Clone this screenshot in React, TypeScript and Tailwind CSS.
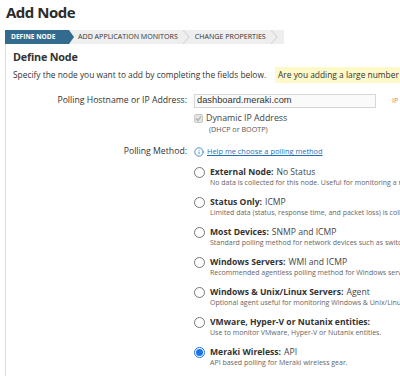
import { Info } from "lucide-react";

type Method = {
  name: string;
  kind?: string;
  desc: string;
  checked?: boolean;
};

const methods: Method[] = [
  {
    name: "External Node:",
    kind: "No Status",
    desc: "No data is collected for this node. Useful for monitoring a node's child objects only.",
  },
  {
    name: "Status Only:",
    kind: "ICMP",
    desc: "Limited data (status, response time, and packet loss) is collected using ICMP.",
  },
  {
    name: "Most Devices:",
    kind: "SNMP and ICMP",
    desc: "Standard polling method for network devices such as switches and routers.",
  },
  {
    name: "Windows Servers:",
    kind: "WMI and ICMP",
    desc: "Recommended agentless polling method for Windows servers.",
  },
  {
    name: "Windows & Unix/Linux Servers:",
    kind: "Agent",
    desc: "Optional agent useful for monitoring Windows & Unix/Linux servers.",
  },
  {
    name: "VMware, Hyper-V or Nutanix entities:",
    desc: "Use to monitor VMware, Hyper-V or Nutanix entities.",
  },
  {
    name: "Meraki Wireless:",
    kind: "API",
    desc: "API based polling for Meraki wireless gear.",
    checked: true,
  },
];

function Chevron() {
  return (
    <svg width="8" height="14" viewBox="0 0 8 14" className="shrink-0">
      <path d="M1 0 L7 7 L1 14" fill="none" stroke="#cfcfcf" strokeWidth="1" />
    </svg>
  );
}

function Radio({ checked }: { checked?: boolean }) {
  return checked ? (
    <span className="flex h-[11px] w-[11px] shrink-0 items-center justify-center rounded-full border border-[#1a73e8] bg-white">
      <span className="h-[7px] w-[7px] rounded-full bg-[#1a73e8]" />
    </span>
  ) : (
    <span className="h-[11px] w-[11px] shrink-0 rounded-full border border-[#767676] bg-white" />
  );
}

export default function App() {
  return (
    <div className="h-[376px] w-[400px] overflow-hidden bg-white font-['Open_Sans',sans-serif] text-[#333]">
      <h1 className="pl-[6px] pt-[1px] text-[15px] font-bold leading-[22px] tracking-[-0.5px] text-[#2b2b2b]">Add Node</h1>

      <nav className="ml-[5px] mt-[7px] flex h-[14px] w-[279px] items-center bg-[#eeeeee] text-[7.1px] uppercase leading-none">
        <div className="flex h-full w-[69px] items-center bg-[#336b8e] pl-[6px] text-[6.6px] font-bold text-white [clip-path:polygon(0_0,calc(100%-5px)_0,100%_50%,calc(100%-5px)_100%,0_100%)]">
          Define Node
        </div>
        <span className="ml-[4px] whitespace-nowrap text-[#333]">Add Application Monitors</span>
        <span className="ml-[4px]">
          <Chevron />
        </span>
        <span className="ml-[5px] whitespace-nowrap text-[#333]">Change Properties</span>
        <span className="ml-[4px]">
          <Chevron />
        </span>
      </nav>

      <section className="ml-[5px] h-[340px] border-l border-[#dddddd] pl-[7px]">
        <h2 className="pt-[5px] text-[10.8px] font-bold leading-[15px] tracking-[-0.2px] text-[#333]">Define Node</h2>
        <div className="mt-[3px] flex h-[16px] items-center whitespace-nowrap text-[8.4px]">
          <span>Specify the node you want to add by completing the fields below.</span>
          <span className="ml-[9px] flex h-full items-center bg-[#fdf9c9] px-[3px]">
            Are you adding a large number of nodes? Try Network Discovery.
          </span>
        </div>

        <div className="mt-[11px] grid grid-cols-[174px_1fr] gap-x-[7px] text-[8.7px]">
          <div className="flex h-[14px] items-center justify-end whitespace-nowrap">
            Polling Hostname or IP Address:
          </div>
          <div className="flex items-center">
            <div className="flex h-[14px] w-[182px] items-center border border-[#d6d6d6] bg-[#fafafa] px-[2px] font-['Liberation_Sans',sans-serif] text-[9.3px] text-[#333]">
              dashboard.meraki.com
            </div>
            <span className="ml-[16px] text-[7px] text-[#d08060]">IP</span>
          </div>

          <div />
          <div className="mt-[5px] flex items-start">
            <span className="mt-[1px] flex h-[9px] w-[9px] shrink-0 items-center justify-center rounded-[2px] border border-[#c8c8c8] bg-[#e4e4e4]">
              <svg width="7" height="7" viewBox="0 0 7 7">
                <path d="M1 3.5 L3 5.5 L6 1.5" fill="none" stroke="#ababab" strokeWidth="1.2" />
              </svg>
            </span>
            <div className="ml-[3px]">
              <div className="text-[8.8px] leading-[11px] text-[#444]">Dynamic IP Address</div>
              <div className="pl-[3px] text-[7.2px] leading-[10px] text-[#555]">(DHCP or BOOTP)</div>
            </div>
          </div>

          <div className="mt-[12px] flex h-[12px] items-center justify-end whitespace-nowrap">Polling Method:</div>
          <div className="mt-[12px] flex h-[12px] items-center">
            <Info className="h-[10px] w-[10px] shrink-0 text-[#2a7ab8]" strokeWidth={2} />
            <a className="ml-[3px] whitespace-nowrap text-[7.4px] text-[#1f6fb5] underline">
              Help me choose a polling method
            </a>
          </div>

          <div />
          <ul className="mt-[9px] flex flex-col gap-[9px]">
            {methods.map((m) => (
              <li key={m.name}>
                <div className="flex h-[11px] items-center whitespace-nowrap text-[8.6px]">
                  <Radio checked={m.checked} />
                  <span className="ml-[5px] font-bold text-[#333]">{m.name}</span>
                  {m.kind ? <span className="ml-[3px] text-[#444]">{m.kind}</span> : null}
                </div>
                <div className="ml-[16px] h-[10px] whitespace-nowrap text-[7px] leading-[10px] text-[#666]">
                  {m.desc}
                </div>
              </li>
            ))}
          </ul>
        </div>
      </section>
    </div>
  );
}
